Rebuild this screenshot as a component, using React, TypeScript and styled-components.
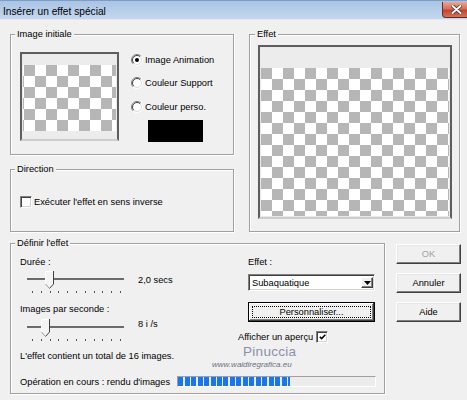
import React from "react";
import styled, { createGlobalStyle } from "styled-components";

const Global = createGlobalStyle`
  html, body { margin: 0; padding: 0; background: #f0f0f0; }
  body { font-family: "Liberation Sans", Arial, sans-serif; }
  #root { width: 467px; height: 400px; overflow: hidden; }
`;

const Window = styled.div`
  width: 467px;
  height: 400px;
  background: #f0f0f0;
  overflow: hidden;
  font-family: "Liberation Sans", Arial, sans-serif;
  font-size: 9.3px;
  color: #000;
  display: flex;
  flex-direction: column;
`;

const TitleBar = styled.div`
  height: 20px;
  flex: none;
  box-sizing: border-box;
  border-top: 1px solid #7f9dc2;
  border-bottom: 1px solid #dfe8f3;
  background: linear-gradient(#a8c4e5, #c4d7ee);
  display: flex;
  align-items: flex-start;
  justify-content: space-between;
`;

const TitleText = styled.span`
  font-size: 10.2px;
  line-height: 12px;
  padding: 5px 0 0 3px;
  color: #000;
`;

const CloseButton = styled.div`
  width: 32px;
  height: 16px;
  margin: 1px -7px 0 0;
  box-sizing: border-box;
  border: 1px solid #6b2b22;
  border-top: none;
  border-radius: 0 0 0 4px;
  background: linear-gradient(#e9a696, #d5705a 45%, #c2432e 55%, #d0735b);
  display: flex;
  align-items: center;
  padding-left: 8px;
`;

const Body = styled.div`
  padding: 14px 0 0 10px;
  display: flex;
  flex-direction: column;
`;

const TopRow = styled.div`
  display: flex;
  gap: 15px;
`;

const LeftCol = styled.div`
  display: flex;
  flex-direction: column;
  gap: 14px;
  width: 224px;
`;

const Group = styled.div<{ $w: number; $h: number }>`
  position: relative;
  box-sizing: border-box;
  width: ${(p) => p.$w}px;
  height: ${(p) => p.$h}px;
  border: 1px solid #a0a0a0;
  box-shadow: inset 1px 1px 0 #fff, 1px 1px 0 #fff;
  display: flex;
  flex-direction: column;
`;

const Legend = styled.span<{ $ml?: number }>`
  align-self: flex-start;
  margin: -7px 0 0 ${(p) => p.$ml ?? 4}px;
  padding: 0 2px;
  height: 13px;
  line-height: 13px;
  background: #f0f0f0;
`;

const InitRow = styled.div`
  display: flex;
  margin: 11px 0 0 9px;
  gap: 12px;
`;

const Frame = styled.div<{ $w: number; $h: number }>`
  box-sizing: border-box;
  width: ${(p) => p.$w}px;
  height: ${(p) => p.$h}px;
  flex: none;
  border: 2px solid #5e5e5e;
  border-bottom-color: #cdcdcd;
  padding: 1px;
  background: #e9e9e9;
  display: flex;
  flex-direction: column;
`;

const Band = styled.div<{ $h: number }>`
  height: ${(p) => p.$h}px;
  flex: none;
  background: #ececec;
`;

const Checker = styled.div<{ $x: number }>`
  flex: 1;
  background: conic-gradient(#b6b6b6 25%, #fff 0 50%, #b6b6b6 0 75%, #fff 0)
    ${(p) => p.$x}px 0 / 22px 22px;
`;

const RadioCol = styled.div`
  display: flex;
  flex-direction: column;
`;

const OptionRow = styled.div<{ $mt: number; $ml?: number }>`
  display: flex;
  align-items: center;
  gap: 2px;
  height: 13px;
  line-height: 13px;
  white-space: nowrap;
  margin-top: ${(p) => p.$mt}px;
  margin-left: ${(p) => p.$ml ?? 0}px;
`;

const Swatch = styled.div`
  width: 55px;
  height: 22px;
  background: #000;
  margin: 6.5px 0 0 17px;
`;

const CheckBox = styled.span`
  width: 12px;
  height: 12px;
  flex: none;
  box-sizing: border-box;
  background: #fff;
  border: 1px solid;
  border-color: #808080 #fff #fff #808080;
  box-shadow: inset 1px 1px 0 #404040, inset -1px -1px 0 #d8d4cc;
  display: flex;
  align-items: center;
  justify-content: center;
`;

const EffectFrameWrap = styled.div`
  margin: 4px 0 0 8px;
`;

const BottomRow = styled.div`
  display: flex;
  gap: 11px;
  margin-top: 11px;
`;

const DefBody = styled.div`
  display: flex;
  padding-left: 9px;
`;

const DefLeft = styled.div`
  width: 228px;
  display: flex;
  flex-direction: column;
`;

const DefRight = styled.div`
  width: 127px;
  display: flex;
  flex-direction: column;
`;

const Text = styled.span<{ $mt?: number }>`
  display: block;
  height: 13px;
  line-height: 13px;
  white-space: nowrap;
  margin-top: ${(p) => p.$mt ?? 0}px;
`;

const SliderRow = styled.div<{ $mt: number }>`
  display: flex;
  align-items: flex-start;
  margin-top: ${(p) => p.$mt}px;
`;

const SliderValue = styled.span<{ $mt: number }>`
  line-height: 13px;
  margin: ${(p) => p.$mt}px 0 0 6px;
  white-space: nowrap;
`;

const Select = styled.div`
  width: 127px;
  height: 17px;
  box-sizing: border-box;
  background: #fff;
  border: 1px solid;
  border-color: #808080 #fff #fff #808080;
  box-shadow: inset 1px 1px 0 #404040, inset -1px -1px 0 #d8d4cc;
  display: flex;
  align-items: center;
  justify-content: space-between;
  padding: 0 1px 0 3px;
  margin-top: 5.5px;
`;

const SelectArrow = styled.span`
  width: 12px;
  height: 11px;
  box-sizing: border-box;
  background: #f0f0f0;
  border: 1px solid;
  border-color: #fff #404040 #404040 #fff;
  box-shadow: inset -1px -1px 0 #808080;
  display: flex;
  align-items: center;
  justify-content: center;
`;

const Button = styled.div<{ $w: number; $mt?: number; $default?: boolean; $disabled?: boolean }>`
  box-sizing: border-box;
  width: ${(p) => p.$w}px;
  height: 20px;
  flex: none;
  margin-top: ${(p) => p.$mt ?? 0}px;
  background: #f0f0f0;
  color: ${(p) => (p.$disabled ? "#a0a0a0" : "#000")};
  border: 1px solid;
  border-color: ${(p) => (p.$default ? "#000" : "#fff #404040 #404040 #fff")};
  box-shadow: ${(p) =>
    p.$default
      ? "inset -1px -1px 0 #404040, inset 1px 1px 0 #fff, inset -2px -2px 0 #808080"
      : "inset -1px -1px 0 #808080, inset 1px 1px 0 #e6e6e6"};
  padding: ${(p) => (p.$default ? "3px" : "0")};
  display: flex;
  align-items: center;
  justify-content: center;
  line-height: 13px;
  white-space: nowrap;
`;

const FocusRing = styled.span`
  flex: 1;
  align-self: stretch;
  border: 1px dotted #000;
  display: flex;
  align-items: center;
  justify-content: center;
`;

const PreviewRow = styled.div`
  display: flex;
  align-items: center;
  gap: 3px;
  height: 13px;
  line-height: 13px;
  white-space: nowrap;
  margin: 8.5px 0 0 -10px;
`;

const ProgressRow = styled.div`
  display: flex;
  align-items: center;
  height: 13px;
  margin: 13px 0 0 9px;
`;

const ProgressLabel = styled.span`
  width: 157px;
  line-height: 13px;
  white-space: nowrap;
`;

const ProgressBar = styled.div`
  width: 199px;
  height: 11px;
  box-sizing: border-box;
  border: 1px solid;
  border-color: #a0a0a0 #fff #fff #a0a0a0;
  background: #ececec;
  margin-bottom: 2px;
`;

const ProgressFill = styled.div`
  height: 100%;
  background: repeating-linear-gradient(90deg, #1a76ec 0 5px, #ececec 5px 6.5px);
`;

const Watermark = styled.div`
  position: absolute;
  left: 201px;
  top: 101px;
  display: flex;
  flex-direction: column;
  pointer-events: none;
`;

const WmName = styled.span`
  font-family: "Liberation Sans", Arial, sans-serif;
  font-size: 13.5px;
  line-height: 14px;
  color: #8a8eae;
  margin-left: 31px;
  letter-spacing: 0.3px;
`;

const WmUrl = styled.span`
  font-size: 8px;
  line-height: 9px;
  color: #6e6e80;
  margin-top: 0.5px;
  font-style: italic;
`;

const ButtonCol = styled.div`
  display: flex;
  flex-direction: column;
  gap: 9px;
  padding-top: 1px;
`;

const Radio = ({ checked }: { checked?: boolean }) => (
  <svg width="12" height="12" viewBox="0 0 12 12" style={{ flex: "none" }}>
    <circle cx="6" cy="6" r="5" fill="#fff" />
    <path d="M9.9 2.1 A5.5 5.5 0 0 0 2.1 9.9" stroke="#808080" fill="none" />
    <path d="M9.2 2.8 A4.5 4.5 0 0 0 2.8 9.2" stroke="#404040" fill="none" />
    <path d="M2.1 9.9 A5.5 5.5 0 0 0 9.9 2.1" stroke="#fff" fill="none" />
    <path d="M2.8 9.2 A4.5 4.5 0 0 0 9.2 2.8" stroke="#dcdcdc" fill="none" />
    {checked && <circle cx="6" cy="6" r="2" fill="#000" />}
  </svg>
);

const Slider = ({ thumb }: { thumb: number }) => {
  const ticks = Array.from({ length: 11 }, (_, i) => 12 + i * 8.8);
  return (
    <svg width="112" height="24" viewBox="0 0 112 24" style={{ flex: "none" }}>
      <rect x="7" y="8" width="97" height="2" fill="#6b6b6b" />
      {ticks.map((x) => (
        <rect key={x} x={Math.round(x)} y="21" width="1" height="2" fill="#555" />
      ))}
      <path d={`M${thumb} 1 h9 v13 l-4.5 5 l-4.5 -5 z`} fill="#f4f4f4" />
      <path d={`M${thumb + 0.5} 14.5 V1.5 H${thumb + 8.5}`} stroke="#fff" fill="none" />
      <path d={`M${thumb + 8.5} 1 V14 L${thumb + 4.5} 18.5`} stroke="#404040" fill="none" />
      <path d={`M${thumb + 0.5} 14 L${thumb + 4.5} 18.5`} stroke="#9a9a9a" fill="none" />
    </svg>
  );
};

export default function App() {
  return (
    <>
      <Global />
      <Window>
        <TitleBar>
          <TitleText>Insérer un effet spécial</TitleText>
          <CloseButton>
            <svg width="11" height="9" viewBox="0 0 11 9">
              <path
                d="M1.5 1 L9.5 8 M9.5 1 L1.5 8"
                stroke="#5a2a22"
                strokeWidth="3.6"
                strokeLinecap="round"
              />
              <path d="M1.5 1 L9.5 8 M9.5 1 L1.5 8" stroke="#fff" strokeWidth="2" strokeLinecap="round" />
            </svg>
          </CloseButton>
        </TitleBar>
        <Body>
          <TopRow>
            <LeftCol>
              <Group $w={224} $h={121}>
                <Legend>Image initiale</Legend>
                <InitRow>
                  <Frame $w={99} $h={89}>
                    <Band $h={10} />
                    <Checker $x={12} />
                    <Band $h={7} />
                  </Frame>
                  <RadioCol>
                    <OptionRow $mt={1.5}>
                      <Radio checked />
                      Image Animation
                    </OptionRow>
                    <OptionRow $mt={10}>
                      <Radio />
                      Couleur Support
                    </OptionRow>
                    <OptionRow $mt={11}>
                      <Radio />
                      Couleur perso.
                    </OptionRow>
                    <Swatch />
                  </RadioCol>
                </InitRow>
              </Group>
              <Group $w={224} $h={63}>
                <Legend>Direction</Legend>
                <OptionRow $mt={19.5} $ml={9}>
                  <CheckBox />
                  Exécuter l'effet en sens inverse
                </OptionRow>
              </Group>
            </LeftCol>
            <Group $w={211} $h={198}>
              <Legend $ml={5}>Effet</Legend>
              <EffectFrameWrap>
                <Frame $w={194} $h={174}>
                  <Band $h={20} />
                  <Checker $x={11} />
                </Frame>
              </EffectFrameWrap>
            </Group>
          </TopRow>
          <BottomRow>
            <Group $w={375} $h={151}>
              <Legend>Définir l'effet</Legend>
              <DefBody>
                <DefLeft>
                  <Text $mt={5.5}>Durée :</Text>
                  <SliderRow $mt={1.5}>
                    <Slider thumb={25} />
                    <SliderValue $mt={3.5}>2,0 secs</SliderValue>
                  </SliderRow>
                  <Text $mt={8.5}>Images par seconde :</Text>
                  <SliderRow $mt={2.5}>
                    <Slider thumb={21} />
                    <SliderValue $mt={0}>8 i /s</SliderValue>
                  </SliderRow>
                  <Text $mt={7.5}>L'effet contient un total de 16 images.</Text>
                </DefLeft>
                <DefRight>
                  <Text $mt={5.5}>Effet :</Text>
                  <Select>
                    <span>Subaquatique</span>
                    <SelectArrow>
                      <svg width="7" height="4" viewBox="0 0 7 4">
                        <path d="M0 0 H7 L3.5 4 Z" fill="#000" />
                      </svg>
                    </SelectArrow>
                  </Select>
                  <Button $w={127} $mt={11} $default>
                    <FocusRing>Personnaliser...</FocusRing>
                  </Button>
                  <PreviewRow>
                    Afficher un aperçu
                    <CheckBox>
                      <svg width="7" height="6" viewBox="0 0 7 6">
                        <path d="M0.8 2.8 L2.6 4.6 L6.3 0.8" stroke="#000" strokeWidth="1.5" fill="none" />
                      </svg>
                    </CheckBox>
                  </PreviewRow>
                </DefRight>
              </DefBody>
              <ProgressRow>
                <ProgressLabel>Opération en cours : rendu d'images</ProgressLabel>
                <ProgressBar>
                  <ProgressFill style={{ width: "112px" }} />
                </ProgressBar>
              </ProgressRow>
              <Watermark>
                <WmName>Pinuccia</WmName>
                <WmUrl>www.waidiregrafica.eu</WmUrl>
              </Watermark>
            </Group>
            <ButtonCol>
              <Button $w={65} $disabled>
                OK
              </Button>
              <Button $w={65}>Annuler</Button>
              <Button $w={65}>Aide</Button>
            </ButtonCol>
          </BottomRow>
        </Body>
      </Window>
    </>
  );
}
